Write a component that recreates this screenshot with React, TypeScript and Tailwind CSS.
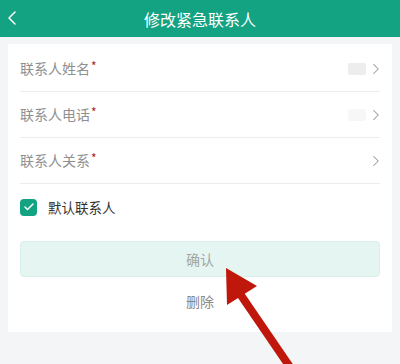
import { ChevronLeft, ChevronRight, Check } from "lucide-react";

const FONT = { fontFamily: '"Noto Sans CJK SC", "Noto Sans", sans-serif' };

const rows = [
  { label: "联系人姓名", value: "bg-[#ededed]" },
  { label: "联系人电话", value: "bg-[#f7f7f7]" },
  { label: "联系人关系", value: "" },
];

export default function App() {
  return (
    <div className="relative w-[400px] h-[364px] overflow-hidden bg-[#f4f5f7]" style={FONT}>
      <div className="relative h-[37px] bg-[#13a282] flex items-center justify-center">
        <ChevronLeft className="absolute left-[0px] top-[6px] w-[24px] h-[24px] text-white" strokeWidth={1.5} />
        <span className="text-white text-[16px]">修改紧急联系人</span>
      </div>

      <div className="mx-[8px] mt-[7px] bg-white px-[12px] pt-[2px] pb-[7px]">
        {rows.map((r) => (
          <div key={r.label} className="h-[46px] flex items-center border-b border-[#ececec]">
            <span className="text-[14px] text-[#8f8f8f]">{r.label}</span>
            <span className="text-[#b3221a] text-[12px] -mt-[6px] ml-[1px]">*</span>
            <div className="flex-1" />
            {r.value && <div className={`w-[18px] h-[12px] rounded-[2px] ${r.value} mr-[1px]`} />}
            <ChevronRight className="w-[18px] h-[18px] text-[#999] -mr-[5px]" strokeWidth={1.4} />
          </div>
        ))}

        <div className="h-[46px] flex items-center">
          <div className="w-[17px] h-[17px] rounded-[4px] bg-[#13a282] flex items-center justify-center">
            <Check className="w-[12px] h-[12px] text-white" strokeWidth={3} />
          </div>
          <span className="ml-[11px] text-[13.5px] text-[#333]">默认联系人</span>
        </div>

        <div className="mt-[11px] h-[36px] rounded-[4px] bg-[#e5f5f1] border border-[#d9efe9] flex items-center justify-center">
          <span className="text-[14px] text-[#a0a8a6]">确认</span>
        </div>

        <div className="h-[48px] flex items-center justify-center">
          <span className="text-[14px] text-[#888]">删除</span>
        </div>
      </div>

      <svg className="absolute left-0 top-0 pointer-events-none" width="400" height="364" viewBox="0 0 400 364">
        <line x1="236" y1="288" x2="292" y2="370" stroke="#c0170c" strokeWidth="8" />
        <polygon points="226,268 257,286 227,305" fill="#c0170c" />
      </svg>
    </div>
  );
}
